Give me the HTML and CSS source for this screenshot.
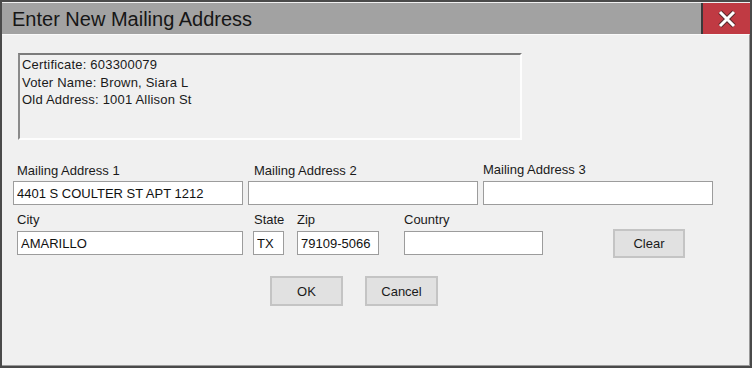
FILE: index.html
```html
<!DOCTYPE html>
<html lang="en">
<head>
  <meta charset="UTF-8" />
  <title>Enter New Mailing Address</title>
  <link rel="stylesheet" href="styles.css">
</head>
<body>
  <div class="window">
    <div class="titlebar">
      <span class="title">Enter New Mailing Address</span>
      <div class="close-btn">
        <svg width="22" height="22" viewBox="0 0 22 22">
          <path d="M4 4 L18 18 M18 4 L4 18" stroke="#5a2a2d" stroke-width="5" fill="none"/>
          <path d="M4 4 L18 18 M18 4 L4 18" stroke="#fff" stroke-width="3" fill="none"/>
        </svg>
      </div>
    </div>

    <div class="content">
      <div class="info-box">
        <div>Certificate: 603300079</div>
        <div>Voter Name: Brown, Siara L</div>
        <div>Old Address: 1001 Allison St</div>
      </div>

      <div class="row row-address">
        <div class="field addr">
          <label class="lbl lbl-a1">Mailing Address 1</label>
          <input type="text" value="4401 S COULTER ST APT 1212">
        </div>
        <div class="field addr">
          <label class="lbl lbl-a2">Mailing Address 2</label>
          <input type="text" value="">
        </div>
        <div class="field addr">
          <label class="lbl lbl-a3">Mailing Address 3</label>
          <input type="text" value="">
        </div>
      </div>

      <div class="row row-city">
        <div class="field city">
          <label class="lbl">City</label>
          <input type="text" value="AMARILLO">
        </div>
        <div class="field state">
          <label class="lbl">State</label>
          <input type="text" value="TX">
        </div>
        <div class="field zip">
          <label class="lbl">Zip</label>
          <input type="text" value="79109-5066">
        </div>
        <div class="field country">
          <label class="lbl">Country</label>
          <input type="text" value="">
        </div>
        <button class="btn clear-btn">Clear</button>
      </div>

      <div class="row row-actions">
        <button class="btn ok-btn">OK</button>
        <button class="btn cancel-btn">Cancel</button>
      </div>
    </div>
  </div>
</body>
</html>
```

FILE: styles.css
```css
* {
  box-sizing: border-box;
}
body {
  margin: 0;
  font-family: "Liberation Sans", Arial, sans-serif;
  background: #f0f0f0;
}
.window {
  width: 752px;
  height: 368px;
  border: 2px solid #4a4a4a;
  background: #f0f0f0;
  display: flex;
  flex-direction: column;
}
.titlebar {
  height: 31px;
  margin-top: 1px;
  background: #a2a2a2;
  display: flex;
  align-items: center;
  justify-content: space-between;
}
.title {
  font-size: 20px;
  color: #161616;
  padding-left: 10px;
  padding-top: 1px;
}
.close-btn {
  width: 49px;
  height: 31px;
  background: #c03a43;
  border-left: 2px solid #3a3a3a;
  display: flex;
  align-items: center;
  justify-content: center;
}
.content {
  flex: 1;
  border-top: 1px solid #fafafa;
  border-right: 1px solid #9a9a9a;
  border-bottom: 1px solid #9a9a9a;
  padding-left: 11px;
  padding-top: 18px;
  font-size: 13px;
  color: #1a1a1a;
}
.info-box {
  width: 504px;
  height: 87px;
  margin-left: 5px;
  border-top: 2px solid #7b7b7b;
  border-left: 2px solid #8a8a8a;
  border-right: 2px solid #fdfdfd;
  border-bottom: 2px solid #fdfdfd;
  padding: 1px 0 0 2px;
  line-height: 17.5px;
  font-size: 13px;
  letter-spacing: 0.2px;
}
.row {
  display: flex;
}
.field {
  display: flex;
  flex-direction: column;
}
.lbl {
  font-size: 13px;
  line-height: 15px;
  height: 15px;
  margin-bottom: 3px;
  color: #1a1a1a;
}
.field input {
  height: 24px;
  border: 1px solid #9c9c9c;
  background: #fff;
  font-family: "Liberation Sans", Arial, sans-serif;
  font-size: 13px;
  color: #111;
  padding: 1px 3px 0;
  margin: 0;
  outline: none;
}
.row-address {
  margin-top: 23px;
  gap: 5px;
}
.addr {
  width: 230px;
}
.lbl-a1 {
  padding-left: 4px;
}
.lbl-a2 {
  padding-left: 6px;
}
.lbl-a3 {
  margin-top: -1px;
  margin-bottom: 4px;
}
.row-city {
  margin-top: 7px;
  align-items: flex-start;
}
.row-city .lbl {
  margin-bottom: 4px;
}
.city {
  margin-left: 4px;
  width: 226px;
}
.state {
  margin-left: 10px;
  width: 31px;
}
.state .lbl {
  padding-left: 1px;
}
.zip {
  margin-left: 13px;
  width: 82px;
}
.country {
  margin-left: 25px;
  width: 139px;
}
.btn {
  font-family: "Liberation Sans", Arial, sans-serif;
  font-size: 13px;
  color: #1a1a1a;
  background: #e1e1e1;
  border: 2px solid #c4c4c4;
  padding: 0;
  margin: 0;
}
.clear-btn {
  margin-left: 70px;
  margin-top: 17px;
  width: 72px;
  height: 29px;
}
.row-actions {
  margin-top: 18px;
}
.ok-btn {
  margin-left: 257px;
  width: 73px;
  height: 30px;
}
.cancel-btn {
  margin-left: 22px;
  width: 73px;
  height: 30px;
}
```
